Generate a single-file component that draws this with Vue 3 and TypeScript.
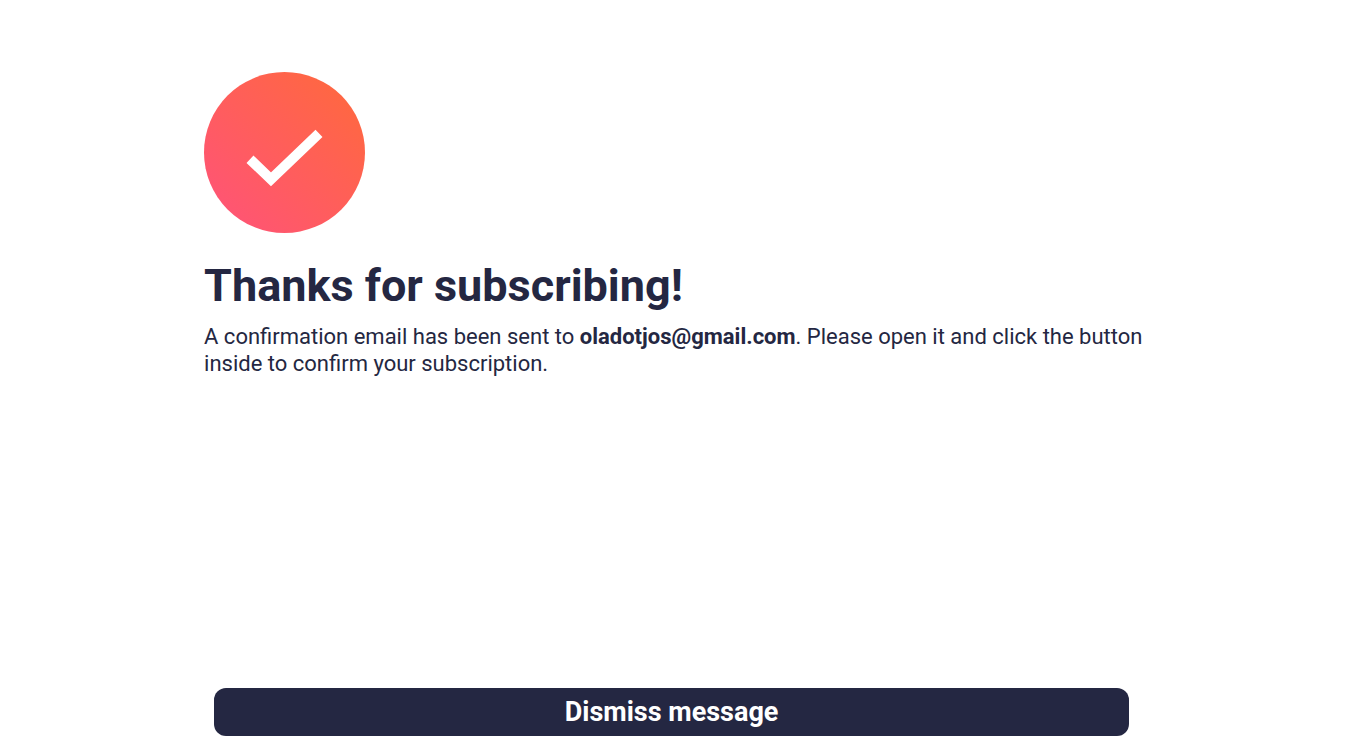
<script setup lang="ts">
import { ref } from 'vue'

const email = ref<string>('oladotjos@gmail.com')
const open = ref<boolean>(true)
</script>

<template>
  <main v-if="open" class="success">
    <section class="message">
      <svg class="icon" viewBox="0 0 64 64" role="img" aria-label="Success">
        <defs>
          <linearGradient id="badge" x1="100%" x2="0%" y1="0%" y2="100%">
            <stop offset="0%" stop-color="#FF6A3A" />
            <stop offset="100%" stop-color="#FF527B" />
          </linearGradient>
        </defs>
        <circle cx="32" cy="32" r="32" fill="url(#badge)" />
        <path fill="none" stroke="#FFF" stroke-width="4" d="m18.286 34.686 8.334 7.98 19.094-18.285" />
      </svg>
      <h1>Thanks for subscribing!</h1>
      <p>
        A confirmation email has been sent to <strong>{{ email }}</strong>. Please open it and click the button inside to confirm your subscription.
      </p>
    </section>
    <button class="dismiss" type="button" @click="open = false">Dismiss message</button>
  </main>
</template>

<style>
body {
  margin: 0;
  background: #ffffff;
}
</style>

<style scoped>
.success {
  box-sizing: border-box;
  display: flex;
  flex-direction: column;
  justify-content: space-between;
  width: 71%;
  min-height: 100vh;
  margin: 0 auto;
  padding: 72px 0 12px 6px;
  color: #242742;
  font-family: Roboto, sans-serif;
}

.icon {
  display: block;
  width: 161px;
  height: 161px;
}

h1 {
  margin: 26px 0 10px;
  font-size: 45px;
  font-weight: 700;
  line-height: 54px;
}

p {
  margin: 0;
  font-size: 22px;
  line-height: 27px;
}

.dismiss {
  width: 915px;
  max-width: 100%;
  height: 48px;
  margin: 0 10px;
  border: 0;
  border-radius: 12px;
  background: #242742;
  color: #ffffff;
  font-family: inherit;
  font-size: 27px;
  font-weight: 700;
  cursor: pointer;
}
</style>
